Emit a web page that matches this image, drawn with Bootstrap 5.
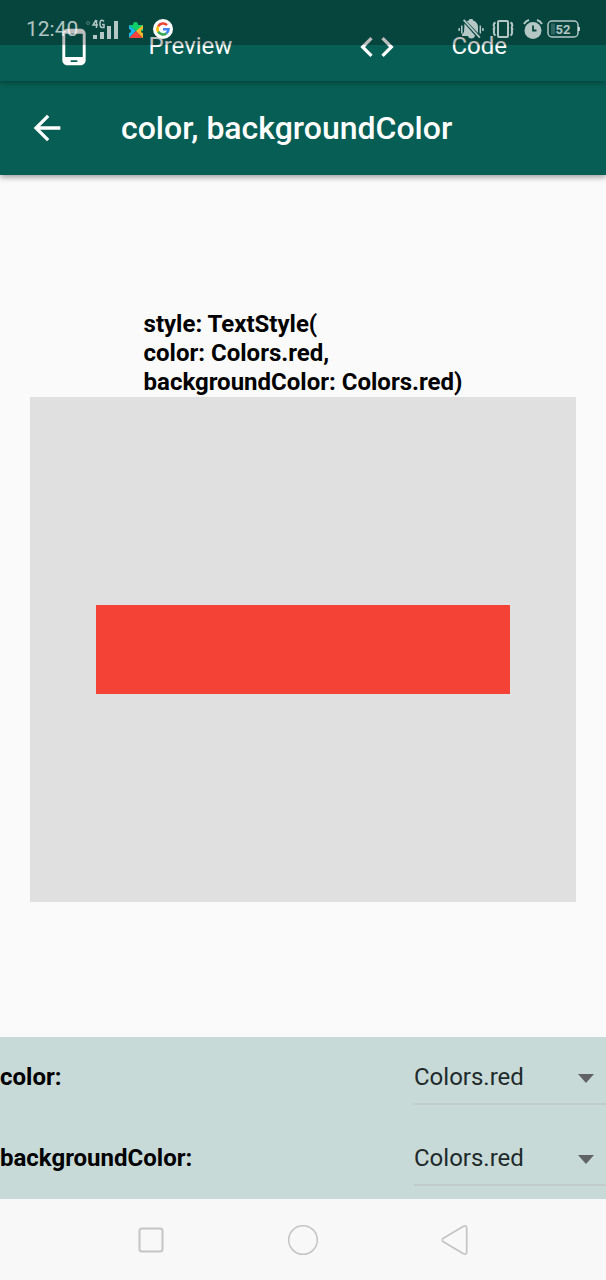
<!DOCTYPE html>
<html lang="en">
<head>
<meta charset="utf-8">
<meta name="viewport" content="width=device-width, initial-scale=1">
<title>color, backgroundColor</title>
<link href="https://cdn.jsdelivr.net/npm/bootstrap@5.3.0/dist/css/bootstrap.min.css" rel="stylesheet">
<style>
  body { font-family: Roboto, "Noto Sans", sans-serif; font-size: 24px; line-height: 29px; background: #fafafa; color: #000; }
  svg { display: block; flex: none; }
  .status-strip { height: 45px; padding: 13px 25px 0 26px; background: rgba(0, 0, 0, .26); color: rgba(255, 255, 255, .7); font-size: 21px; z-index: 3; pointer-events: none; }
  .status-strip .status-group { height: 32px; }
  .tab-strip { background: #075e54; padding-top: 12px; height: 81px; box-shadow: 0 2px 5px rgba(0, 0, 0, .3); z-index: 2; }
  .tab-link { padding-right: 6px; color: #fff; height: 69px; }
  .app-bar { background: #075e54; height: 94px; padding-left: 27px; gap: 54px; box-shadow: 0 2px 6px rgba(0, 0, 0, .4); z-index: 1; }
  .app-title { font-size: 32px; line-height: 40px; font-weight: 500; color: #fff; }
  .demo-area { padding: 0 30px; }
  .snippet { font: inherit; font-weight: 700; }
  .canvas { height: 505px; background: #e0e0e0; }
  .swatch { width: 76%; height: 89px; background: #f44336; }
  .options { background: #c8dad8; }
  .option { height: 81px; }
  .option label { font-weight: 700; }
  .option .form-select {
    --bs-form-select-bg-img: url("data:image/svg+xml,%3Csvg xmlns='http://www.w3.org/2000/svg' viewBox='0 0 16 9'%3E%3Cpath fill='%23616264' d='M0 0h16L8 9z'/%3E%3C/svg%3E");
    width: 192px; height: 55px; padding: 2px 36px 0 0; border: 0; border-bottom: 2px solid #c0cbca; border-radius: 0;
    background-color: transparent; background-size: 16px 9px; background-position: right 12px top 24px;
    font-size: 24px; line-height: 29px; color: #212a2a;
  }
  .system-nav { height: 81px; padding: 0 75px; background: #f8f8f8; }
  .system-nav svg { margin: auto; }
</style>
</head>
<body>
<div class="min-vh-100 d-flex flex-column position-relative">

  <div class="status-strip position-absolute top-0 start-0 w-100 d-flex justify-content-between">
    <div class="status-group d-flex align-items-center">
      <span>12:40</span>
      <svg class="ms-2" width="34" height="20" viewBox="2 0 34 20" fill="currentColor" role="img" aria-label="4G signal">
        <circle cx="4" cy="4" r="1.5" fill="none" stroke="currentColor" opacity=".4"/>
        <path d="M9 16h4v4H9zM16 13h4v7h-4zM23 7h4v13h-4zM30 2h4v18h-4z"/>
        <path d="M12 1L9 6h5M12.500 1v8M20 2.500Q19 1 17.500 1.200 16 1.500 16 5t2 3.500h2V5.500h-2" fill="none" stroke="currentColor" stroke-width="1.500"/>
      </svg>
      <svg class="ms-2" width="17" height="20" viewBox="0 0 17 20" aria-hidden="true">
        <path d="M1 6h4a2.500 3 0 1 1 5 0h5v6H8z" fill="#0fcf6a"/>
        <path d="M1 6l7 6-7 7v-5a2 2 0 1 0 0-4z" fill="#16b9ee"/>
        <path d="M1 19l7-7 7 7z" fill="#f8443c"/>
        <path d="M15 6v4a2 2 0 1 0 0 4v5l-7-7z" fill="#f9b52b"/>
      </svg>
      <svg class="ms-2" width="20" height="20" viewBox="0 0 20 20" aria-hidden="true">
        <circle cx="10" cy="10" r="10" fill="#fff"/>
        <g fill="none" stroke-width="2.600">
          <path d="M14 6.200A5.500 5.500 0 0 0 5.200 7.300" stroke="#ea4335"/>
          <path d="M5.200 7.300a5.500 5.500 0 0 0 0 5.400" stroke="#fbbc05"/>
          <path d="M5.200 12.700a5.500 5.500 0 0 0 8.300 1.500" stroke="#34a853"/>
          <path d="M13.500 14.200A5.500 5.500 0 0 0 15.500 10.200H10" stroke="#4285f4"/>
        </g>
      </svg>
    </div>
    <div class="status-group d-flex align-items-center">
      <svg width="26" height="20" viewBox="0 0 26 20" fill="currentColor" role="img" aria-label="Muted">
        <path d="M5 1.500l1.300-1.200L22.500 18l-1.300 1.200z"/>
        <path d="M8.800 2.200Q9.800 1.200 11 1.500a2 2 0 0 1 4 0q4.500 1.300 5 6v6.500zM6.500 4.500L17 16.500q-.5 3-3.500 3t-3.500-2.500H4v-1.500L6 13z"/>
        <path d="M1.200 9v3M3.800 6.500v8M22.300 6.500v8M24.900 9v3" stroke="currentColor" stroke-width="1.500"/>
      </svg>
      <svg class="ms-2" width="23" height="20" viewBox="1 0 23 20" fill="none" stroke="currentColor" stroke-width="2" role="img" aria-label="Vibrate">
        <rect x="7" y="2" width="10" height="16" rx="1"/>
        <path d="M4.500 3.500Q2 4.500 3 7.500T1.800 10q1.700 0 1.200 2.500t1.500 4M19.500 3.500Q22 4.500 21 7.500t1.200 2.500q-1.700 0-1.200 2.500t-1.500 4"/>
      </svg>
      <svg class="ms-2" width="20" height="20" viewBox="0 0 20 20" role="img" aria-label="Alarm">
        <circle cx="10" cy="11.500" r="8.500" fill="currentColor"/>
        <path d="M1 5q1.500-3 5-4M19 5q-1.500-3-5-4" stroke="currentColor" stroke-width="2" fill="none"/>
        <path d="M10 6.500v5h3.500" stroke="#07463f" stroke-width="1.800" fill="none"/>
      </svg>
      <svg class="ms-1" width="34" height="20" viewBox="0 0 34 20" role="img" aria-label="Battery 52 percent">
        <rect x="1" y="2" width="30" height="16" rx="4" fill="none" stroke="currentColor" stroke-width="1.500"/>
        <path d="M4 4.500h4v11H4z" fill="currentColor" opacity=".25"/>
        <path d="M32 8v4" stroke="currentColor" stroke-width="2"/>
        <text x="16" y="15" text-anchor="middle" font-family="Roboto, sans-serif" font-size="13" font-weight="700" fill="currentColor">52</text>
      </svg>
    </div>
  </div>

  <nav class="tab-strip row g-0 position-relative" aria-label="View">
    <a class="col-6 tab-link d-flex align-items-center text-decoration-none" href="#preview">
      <span class="w-50 d-flex justify-content-center"><svg width="40" height="40" viewBox="0 0 24 24" fill="#fff" aria-hidden="true"><path d="M16 1H8C6.340 1 5 2.340 5 4v16c0 1.660 1.340 3 3 3h8c1.660 0 3-1.340 3-3V4c0-1.660-1.340-3-3-3zm-2 20h-4v-1h4v1zm3.250-3H6.750V4h10.500v14z"/></svg></span>
      <span class="w-50">Preview</span>
    </a>
    <a class="col-6 tab-link d-flex align-items-center text-decoration-none" href="#code">
      <span class="w-50 d-flex justify-content-center"><svg width="40" height="40" viewBox="0 0 24 24" fill="#fff" aria-hidden="true"><path d="M9.400 16.600L4.800 12l4.600-4.600L8 6l-6 6 6 6 1.400-1.400zm5.200 0l4.600-4.600-4.600-4.600L16 6l6 6-6 6-1.400-1.400z"/></svg></span>
      <span class="w-50">Code</span>
    </a>
  </nav>

  <header class="app-bar d-flex align-items-center position-relative">
    <button type="button" class="btn p-0 border-0" aria-label="Back">
      <svg width="40" height="40" viewBox="0 0 24 24" fill="#fff" aria-hidden="true"><path d="M20 11H7.830l5.590-5.590L12 4l-8 8 8 8 1.410-1.410L7.830 13H20v-2z"/></svg>
    </button>
    <h1 class="app-title m-0">color, backgroundColor</h1>
  </header>

  <main id="preview" class="demo-area flex-grow-1 d-flex flex-column justify-content-center">
    <p class="snippet mb-0 mx-auto">style: TextStyle(<br>color: Colors.red,<br>backgroundColor: Colors.red)</p>
    <div class="canvas d-flex align-items-center justify-content-center">
      <div class="swatch"></div>
    </div>
  </main>

  <form class="options">
    <div class="option d-flex align-items-center justify-content-between">
      <label for="color">color:</label>
      <select id="color" class="form-select"><option>Colors.red</option></select>
    </div>
    <div class="option d-flex align-items-center justify-content-between">
      <label for="background">backgroundColor:</label>
      <select id="background" class="form-select"><option>Colors.red</option></select>
    </div>
  </form>

  <nav class="system-nav d-flex align-items-center" aria-label="System">
    <button type="button" class="btn border-0 p-0 flex-fill" aria-label="Recent apps">
      <svg width="32" height="32" viewBox="0 0 32 32" fill="none" stroke="#c4c4c4" stroke-width="2"><rect x="4.500" y="4.500" width="23" height="23" rx="2.500"/></svg>
    </button>
    <button type="button" class="btn border-0 p-0 flex-fill" aria-label="Home">
      <svg width="32" height="32" viewBox="0 0 32 32" fill="none" stroke="#c4c4c4" stroke-width="1.500"><circle cx="16" cy="16" r="14.300"/></svg>
    </button>
    <button type="button" class="btn border-0 p-0 flex-fill" aria-label="Back to previous screen">
      <svg width="32" height="32" viewBox="0 0 32 32" fill="none" stroke="#c4c4c4" stroke-width="1.700" stroke-linejoin="round"><path d="M4.300 14.300L24.500 2.300Q27.500 1 27.700 4v24q-.2 3-3.200 1.700L4.300 17.700q-2.300-1.700 0-3.400z"/></svg>
    </button>
  </nav>
</div>
<script src="https://cdn.jsdelivr.net/npm/bootstrap@5.3.0/dist/js/bootstrap.bundle.min.js"></script>
</body>
</html>
